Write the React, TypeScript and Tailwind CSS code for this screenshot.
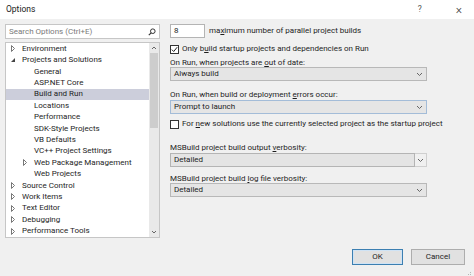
import React from "react";

const font = { fontFamily: 'Roboto, "Noto Sans", "Liberation Sans", sans-serif' };

function Arrow({ open }: { open?: boolean }) {
  if (open) {
    return (
      <svg width="6" height="6" viewBox="0 0 6 6" className="shrink-0">
        <path d="M5 1 L5 5 L1 5 Z" fill="#444" />
      </svg>
    );
  }
  return (
    <svg width="6" height="7" viewBox="0 0 6 7" className="shrink-0">
      <path d="M1.5 0.5 L4.5 3.5 L1.5 6.5 Z" fill="none" stroke="#777" strokeWidth="1" />
    </svg>
  );
}

type Item = { label: string; level: 0 | 1; arrow?: "open" | "closed"; selected?: boolean };

const items: Item[] = [
  { label: "Environment", level: 0, arrow: "closed" },
  { label: "Projects and Solutions", level: 0, arrow: "open" },
  { label: "General", level: 1 },
  { label: "ASP.NET Core", level: 1 },
  { label: "Build and Run", level: 1, selected: true },
  { label: "Locations", level: 1 },
  { label: "Performance", level: 1 },
  { label: "SDK-Style Projects", level: 1 },
  { label: "VB Defaults", level: 1 },
  { label: "VC++ Project Settings", level: 1 },
  { label: "Web Package Management", level: 1, arrow: "closed" },
  { label: "Web Projects", level: 1 },
  { label: "Source Control", level: 0, arrow: "closed" },
  { label: "Work Items", level: 0, arrow: "closed" },
  { label: "Text Editor", level: 0, arrow: "closed" },
  { label: "Debugging", level: 0, arrow: "closed" },
  { label: "Performance Tools", level: 0, arrow: "closed" },
];

function Chevron() {
  return (
    <svg width="7" height="5" viewBox="0 0 7 5">
      <path d="M1 1 L3.5 3.5 L6 1" fill="none" stroke="#666" strokeWidth="1" />
    </svg>
  );
}

function Dropdown({ value, editable, focus }: { value: string; editable?: boolean; focus?: boolean }) {
  if (editable) {
    return (
      <div className="flex h-[14px] w-[257px] items-stretch">
        <div className="flex flex-1 items-center border border-[#b4b4b4] bg-[#e4e4e4] pl-[3px] text-[#1e1e1e]">
          {value}
        </div>
        <div className="flex w-[12px] items-center justify-center border-y border-r border-[#cfcfcf] bg-[#f0f0f0]">
          <Chevron />
        </div>
      </div>
    );
  }
  return (
    <div
      className={`flex h-[14px] w-[257px] items-center justify-between border bg-[#e5e5e5] pl-[3px] pr-[3px] text-[#1e1e1e] ${
        focus ? "border-[#a3bcd8]" : "border-[#b8b8b8]"
      }`}
    >
      <span>{value}</span>
      <Chevron />
    </div>
  );
}

function Check({ checked }: { checked?: boolean }) {
  return (
    <div className="flex h-[9px] w-[9px] shrink-0 items-center justify-center border border-[#333] bg-white">
      {checked && (
        <svg width="7" height="7" viewBox="0 0 7 7">
          <path d="M0.8 3.6 L2.7 5.5 L6.2 1.2" fill="none" stroke="#222" strokeWidth="1" />
        </svg>
      )}
    </div>
  );
}

export default function App() {
  return (
    <div className="flex h-[276px] w-[474px] flex-col overflow-hidden bg-[#f0f0f0] text-[8px] text-[#1e1e1e]" style={font}>
      {/* title bar */}
      <div className="flex h-[19px] shrink-0 items-center bg-white pl-[6px] text-[8.5px] text-[#222]">
        <span className="flex-1">Options</span>
        <span className="w-[38px] text-[8.5px] text-[#555]">?</span>
        <span className="mr-[12px] text-[12px] font-light leading-none text-[#333]">×</span>
      </div>

      <div className="flex h-[224px] shrink-0 pt-[5px]">
        {/* left */}
        <div className="ml-[5px] flex w-[155px] flex-col gap-[3px]">
          <div className="flex h-[15px] items-center justify-between border border-[#c6c6c6] bg-white pl-[3px] pr-[3px]">
            <span className="text-[#7a7a7a]">Search Options (Ctrl+E)</span>
            <svg width="8" height="8" viewBox="0 0 8 8">
              <circle cx="4.8" cy="3.2" r="2.3" fill="none" stroke="#333" strokeWidth="1" />
              <path d="M3.2 4.8 L0.8 7.2" stroke="#333" strokeWidth="1.2" />
            </svg>
          </div>
          <div className="flex h-[196px] border border-[#c6c6c6] bg-white">
            <div className="flex flex-1 flex-col">
              {items.map((it) => (
                <div
                  key={it.label}
                  className={`flex h-[11.42px] items-center whitespace-nowrap leading-none ${
                    it.selected ? "bg-[#cccedb]" : ""
                  } ${it.level === 0 ? "pl-[4px]" : "pl-[16px]"}`}
                >
                  <div className="flex w-[12px] items-center">
                    {it.arrow === "open" && <Arrow open />}
                    {it.arrow === "closed" && <Arrow />}
                  </div>
                  <span>{it.label}</span>
                </div>
              ))}
            </div>
            <div className="flex w-[10px] flex-col items-center bg-[#e9e9e9]">
              <div className="flex h-[10px] items-center justify-center">
                <svg width="6" height="4" viewBox="0 0 6 4">
                  <path d="M1 3 L3 1 L5 3" fill="none" stroke="#666" strokeWidth="1" />
                </svg>
              </div>
              <div className="h-[75px] w-[8px] bg-[#cdcdcd]" />
              <div className="flex-1" />
              <div className="flex h-[10px] items-center justify-center">
                <svg width="6" height="4" viewBox="0 0 6 4">
                  <path d="M1 1 L3 3 L5 1" fill="none" stroke="#666" strokeWidth="1" />
                </svg>
              </div>
            </div>
          </div>
        </div>

        {/* right */}
        <div className="ml-[10px] flex flex-col whitespace-nowrap leading-none">
          <div className="flex h-[14px] items-center">
            <div className="flex h-[14px] w-[35px] items-center border border-[#b4b4b4] bg-white pl-[3px]">8</div>
            <span className="ml-[4px]">
              ma<u>x</u>imum number of parallel project builds
            </span>
          </div>
          <div className="mt-[6px] flex h-[10px] items-center gap-[3px]">
            <Check checked />
            <span>
              Only b<u>u</u>ild startup projects and dependencies on Run
            </span>
          </div>
          <div className="mt-[4px] flex h-[9px] items-center">
            <span>
              On Run, when projects are <u>o</u>ut of date:
            </span>
          </div>
          <Dropdown value="Always build" />
          <div className="mt-[9px] flex h-[9px] items-center">
            <span>
              On Run, when build or deployment <u>e</u>rrors occur:
            </span>
          </div>
          <div className="mt-[1px]">
            <Dropdown value="Prompt to launch" focus />
          </div>
          <div className="mt-[5px] flex h-[10px] items-center gap-[3px]">
            <Check />
            <span>
              For <u>n</u>ew solutions use the currently selected project as the startup project
            </span>
          </div>
          <div className="mt-[14px] flex h-[9px] items-center">
            <span>
              MSBuild project build output <u>v</u>erbosity:
            </span>
          </div>
          <div className="mt-[1px]">
            <Dropdown value="Detailed" editable />
          </div>
          <div className="mt-[7px] flex h-[9px] items-center">
            <span>
              MSBuild project build <u>l</u>og file verbosity:
            </span>
          </div>
          <Dropdown value="Detailed" />
        </div>
      </div>

      {/* footer */}
      <div className="flex flex-1 items-start justify-end gap-[8px] pt-[6px] pr-[9px]">
        <button className="flex h-[16px] w-[51px] items-center justify-center border border-[#3c7fb1] bg-[#e1e1e1] text-[#1e1e1e] shadow-[inset_0_0_0_1px_#cfe3f5]">
          OK
        </button>
        <button className="flex h-[16px] w-[54px] items-center justify-center border border-[#adadad] bg-[#e1e1e1] text-[#1e1e1e]">
          Cancel
        </button>
      </div>
      <div className="flex h-[4px] justify-end pr-[2px]">
        <svg width="5" height="4" viewBox="0 0 5 4">
          <rect x="3" y="0" width="1" height="1" fill="#b5b5b5" />
          <rect x="1" y="2" width="1" height="1" fill="#b5b5b5" />
          <rect x="3" y="2" width="1" height="1" fill="#b5b5b5" />
        </svg>
      </div>
    </div>
  );
}
